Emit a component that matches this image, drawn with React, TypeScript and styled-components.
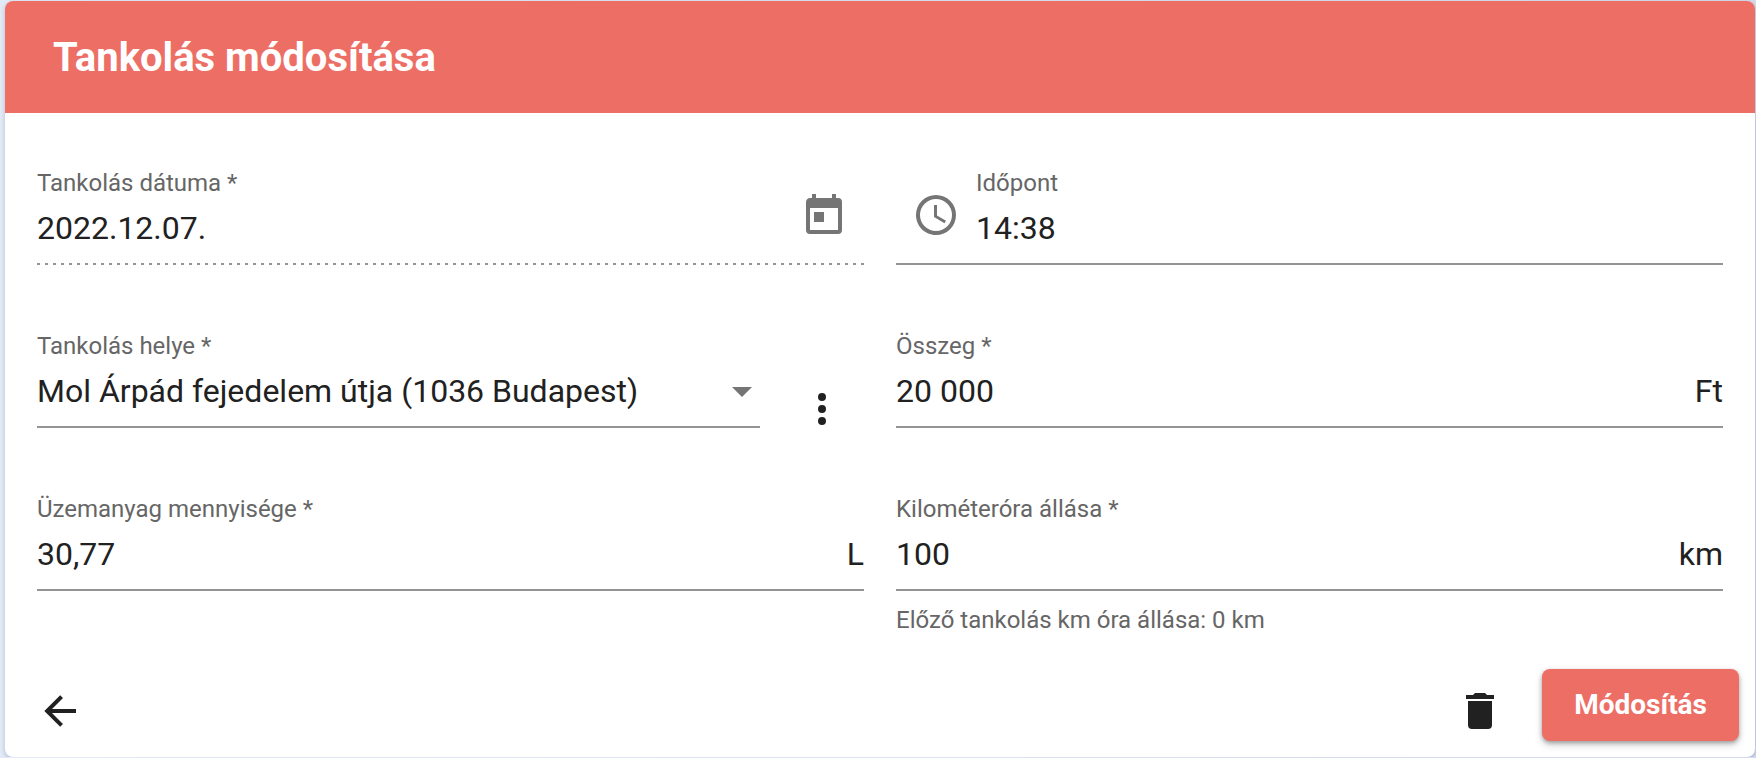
import React from 'react';
import styled, { createGlobalStyle } from 'styled-components';

const coral = '#ed6e65';
const ink = '#212121';
const muted = '#666666';
const line = '#949494';

const GlobalStyle = createGlobalStyle`
  *, *::before, *::after { box-sizing: border-box; }
  body {
    margin: 0;
    font-family: Roboto, "Liberation Sans", sans-serif;
    color: ${ink};
    background: linear-gradient(to right, #e2eaf5, #d3daea);
  }
`;

const Page = styled.main`
  padding: 1px 1px 0 5px;
`;

const Card = styled.form`
  overflow: hidden;
  border-radius: 8px;
  background: #ffffff;
  box-shadow: 0 2px 4px rgba(40, 60, 110, 0.25);
`;

const CardHeader = styled.header`
  padding: 33px 48px 31px;
  background: ${coral};
  color: #ffffff;
`;

const Title = styled.h1`
  margin: 0;
  font-size: 40px;
  line-height: 48px;
  font-weight: 700;
`;

const Fields = styled.div`
  display: grid;
  grid-template-columns: 1fr 1fr;
  column-gap: 32px;
  row-gap: 67px;
  padding: 56px 32px 0;
`;

const FieldCell = styled.div`
  display: flex;
  align-items: flex-start;
  min-width: 0;
`;

const Field = styled.div<{ $disabled?: boolean }>`
  flex: 1;
  min-width: 0;
  display: flex;
  align-items: center;
  height: 96px;
  padding-bottom: 2px;
  background: ${({ $disabled }) =>
    $disabled
      ? `repeating-linear-gradient(to right, ${line} 0 3px, transparent 3px 8px)`
      : `linear-gradient(${line}, ${line})`}
    left bottom / 100% 2px no-repeat;
`;

const FieldBody = styled.div`
  flex: 1;
  min-width: 0;
  align-self: stretch;
`;

const Label = styled.label`
  display: block;
  font-size: 24px;
  line-height: 28px;
  color: ${muted};
`;

const ValueRow = styled.div`
  display: flex;
  align-items: center;
  margin-top: 7px;
  font-size: 32px;
  line-height: 48px;
`;

const TextInput = styled.input`
  flex: 1;
  min-width: 0;
  width: 100%;
  height: 48px;
  padding: 0;
  border: 0;
  outline: 0;
  background: transparent;
  color: ${ink};
  -webkit-text-fill-color: ${ink};
  opacity: 1;
  font: inherit;
`;

const SelectBox = styled.div`
  flex: 1;
  display: grid;
  align-items: center;
  grid-template-columns: 1fr 36px;
`;

const Select = styled.select`
  grid-area: 1 / 1 / 2 / 3;
  height: 48px;
  padding: 0 36px 0 0;
  border: 0;
  outline: 0;
  appearance: none;
  background: transparent;
  color: ${ink};
  font: inherit;
`;

const Caret = styled.svg`
  grid-area: 1 / 2;
  justify-self: start;
  margin-top: 2px;
  margin-left: 8px;
  pointer-events: none;
  fill: #757575;
`;

const Prefix = styled.span`
  display: flex;
  padding: 0 16px 2px;
  color: #757575;
`;

const IconButton = styled.button<{ $muted?: boolean }>`
  display: flex;
  padding: 0;
  border: 0;
  background: transparent;
  color: ${({ $muted }) => ($muted ? '#757575' : ink)};
  cursor: pointer;
`;

const PickerSlot = styled.div`
  padding-right: 16px;
`;

const MenuSlot = styled.div`
  height: 96px;
  padding: 53px 18px 0 38px;
`;

const Hint = styled.p`
  margin: 15px 0 0;
  font-size: 24px;
  line-height: 28px;
  color: ${muted};
`;

const Actions = styled.footer`
  display: flex;
  align-items: flex-end;
  justify-content: space-between;
  padding: 35px 16px 16px 31px;
`;

const ActionGroup = styled.div`
  display: flex;
  align-items: flex-end;
  gap: 38px;

  ${IconButton} {
    margin-bottom: 6px;
  }
`;

const SubmitButton = styled.button`
  height: 72px;
  padding: 0 32px;
  border: 0;
  border-radius: 8px;
  background: ${coral};
  color: #ffffff;
  font: 700 28px/72px Roboto, "Liberation Sans", sans-serif;
  box-shadow: 0 2px 4px rgba(0, 0, 0, 0.3), 0 4px 8px rgba(0, 0, 0, 0.15);
  cursor: pointer;
`;

const icons = {
  calendar:
    'M7,10H12V15H7M19,19H5V8H19M19,3H18V1H16V3H8V1H6V3H5C3.89,3 3,3.9 3,5V19A2,2 0 0,0 5,21H19A2,2 0 0,0 21,19V5A2,2 0 0,0 19,3Z',
  clock:
    'M12,20A8,8 0 0,0 20,12A8,8 0 0,0 12,4A8,8 0 0,0 4,12A8,8 0 0,0 12,20M12,2A10,10 0 0,1 22,12A10,10 0 0,1 12,22C6.47,22 2,17.5 2,12A10,10 0 0,1 12,2M12.5,7V12.25L17,14.92L16.25,16.15L11,13V7H12.5Z',
  more:
    'M12,16A2,2 0 0,1 14,18A2,2 0 0,1 12,20A2,2 0 0,1 10,18A2,2 0 0,1 12,16M12,10A2,2 0 0,1 14,12A2,2 0 0,1 12,14A2,2 0 0,1 10,12A2,2 0 0,1 12,10M12,4A2,2 0 0,1 14,6A2,2 0 0,1 12,8A2,2 0 0,1 10,6A2,2 0 0,1 12,4Z',
  back: 'M20,11V13H8L13.5,18.5L12.08,19.92L4.16,12L12.08,4.08L13.5,5.5L8,11H20Z',
  trash:
    'M19,4H15.5L14.5,3H9.5L8.5,4H5V6H19M6,19A2,2 0 0,0 8,21H16A2,2 0 0,0 18,19V7H6V19Z',
};

function Icon({ name }: { name: keyof typeof icons }) {
  return (
    <svg width="48" height="48" viewBox="0 0 24 24" fill="currentColor" aria-hidden="true">
      <path d={icons[name]} />
    </svg>
  );
}

interface TextFieldProps {
  id: string;
  label: string;
  value: string;
  unit?: string;
  disabled?: boolean;
  prefix?: React.ReactNode;
  suffix?: React.ReactNode;
}

function TextField({ id, label, value, unit, disabled, prefix, suffix }: TextFieldProps) {
  return (
    <Field $disabled={disabled}>
      {prefix}
      <FieldBody>
        <Label htmlFor={id}>{label}</Label>
        <ValueRow>
          <TextInput id={id} type="text" defaultValue={value} disabled={disabled} />
          {unit && <span>{unit}</span>}
        </ValueRow>
      </FieldBody>
      {suffix}
    </Field>
  );
}

export default function App() {
  return (
    <Page>
      <GlobalStyle />
      <Card onSubmit={(e) => e.preventDefault()}>
        <CardHeader>
          <Title>Tankolás módosítása</Title>
        </CardHeader>
        <Fields>
          <FieldCell>
            <TextField
              id="date"
              label="Tankolás dátuma *"
              value="2022.12.07."
              disabled
              suffix={
                <PickerSlot>
                  <IconButton type="button" $muted aria-label="Naptár">
                    <Icon name="calendar" />
                  </IconButton>
                </PickerSlot>
              }
            />
          </FieldCell>
          <FieldCell>
            <TextField
              id="time"
              label="Időpont"
              value="14:38"
              prefix={
                <Prefix>
                  <Icon name="clock" />
                </Prefix>
              }
            />
          </FieldCell>
          <FieldCell>
            <Field>
              <FieldBody>
                <Label htmlFor="place">Tankolás helye *</Label>
                <ValueRow>
                  <SelectBox>
                    <Select id="place" defaultValue="mol">
                      <option value="mol">Mol Árpád fejedelem útja (1036 Budapest)</option>
                    </Select>
                    <Caret width="20" height="10" viewBox="0 0 20 10" aria-hidden="true">
                      <path d="M0 0H20L10 10Z" />
                    </Caret>
                  </SelectBox>
                </ValueRow>
              </FieldBody>
            </Field>
            <MenuSlot>
              <IconButton type="button" aria-label="További műveletek">
                <Icon name="more" />
              </IconButton>
            </MenuSlot>
          </FieldCell>
          <FieldCell>
            <TextField id="amount" label="Összeg *" value="20 000" unit="Ft" />
          </FieldCell>
          <FieldCell>
            <TextField id="volume" label="Üzemanyag mennyisége *" value="30,77" unit="L" />
          </FieldCell>
          <div>
            <TextField id="odometer" label="Kilométeróra állása *" value="100" unit="km" />
            <Hint>Előző tankolás km óra állása: 0 km</Hint>
          </div>
        </Fields>
        <Actions>
          <ActionGroup>
            <IconButton type="button" aria-label="Vissza">
              <Icon name="back" />
            </IconButton>
          </ActionGroup>
          <ActionGroup>
            <IconButton type="button" aria-label="Törlés">
              <Icon name="trash" />
            </IconButton>
            <SubmitButton type="submit">Módosítás</SubmitButton>
          </ActionGroup>
        </Actions>
      </Card>
    </Page>
  );
}
